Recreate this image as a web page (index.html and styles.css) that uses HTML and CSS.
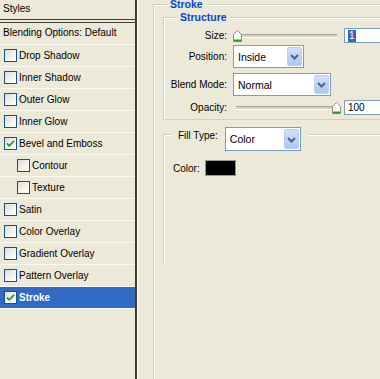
FILE: index.html
```html
<!DOCTYPE html>
<html>
<head>
<meta charset="utf-8">
<link rel="stylesheet" href="styles.css">
</head>
<body>
<div class="app">
  <div class="sidebar">
    <div class="styles-head">Styles</div>
    <div class="list">
      <div class="blend-row">Blending Options: Default</div>
      <div class="row"><span class="cb"></span>Drop Shadow</div>
      <div class="row"><span class="cb"></span>Inner Shadow</div>
      <div class="row"><span class="cb"></span>Outer Glow</div>
      <div class="row"><span class="cb"></span>Inner Glow</div>
      <div class="row"><span class="cb"><svg viewBox="0 0 11 11" class="check"><path d="M2 5.5 L4.3 7.8 L9 2.8"/></svg></span>Bevel and Emboss</div>
      <div class="row sub"><span class="cb"></span>Contour</div>
      <div class="row sub"><span class="cb"></span>Texture</div>
      <div class="row"><span class="cb"></span>Satin</div>
      <div class="row"><span class="cb"></span>Color Overlay</div>
      <div class="row"><span class="cb"></span>Gradient Overlay</div>
      <div class="row"><span class="cb"></span>Pattern Overlay</div>
      <div class="row selected"><span class="cb"><svg viewBox="0 0 11 11" class="check"><path d="M2 5.5 L4.3 7.8 L9 2.8"/></svg></span>Stroke</div>
    </div>
  </div>
  <div class="main">
    <div class="group stroke-group">
      <div class="group-title">Stroke</div>
      <div class="group structure">
        <div class="group-title">Structure</div>
        <div class="field size-row">
          <span class="label">Size:</span>
          <div class="slider">
            <div class="track"></div>
            <svg class="thumb thumb-left" viewBox="0 0 9 12"><path d="M0.5 11.5 V4.5 L4.5 0.5 L8.5 4.5 V11.5 Z" fill="#fff" stroke="#8c8c7c"/><rect x="1" y="9.5" width="7" height="2" fill="#21A121"/></svg>
          </div>
          <div class="num"><span class="sel">1</span></div>
        </div>
        <div class="field pos-row">
          <span class="label">Position:</span>
          <div class="select w-pos"><span class="sel-text">Inside</span><span class="dd"><svg viewBox="0 0 13 17"><polyline points="3,7 6.5,10.5 10,7"/></svg></span></div>
        </div>
        <div class="field blend-mode-row">
          <span class="label">Blend Mode:</span>
          <div class="select w-blend"><span class="sel-text">Normal</span><span class="dd"><svg viewBox="0 0 13 17"><polyline points="3,7 6.5,10.5 10,7"/></svg></span></div>
        </div>
        <div class="field opacity-row">
          <span class="label">Opacity:</span>
          <div class="slider">
            <div class="track"></div>
            <svg class="thumb thumb-right" viewBox="0 0 9 12"><path d="M0.5 11.5 V4.5 L4.5 0.5 L8.5 4.5 V11.5 Z" fill="#fff" stroke="#8c8c7c"/><rect x="1" y="9.5" width="7" height="2" fill="#21A121"/></svg>
          </div>
          <div class="num">100</div>
        </div>
      </div>
      <div class="group fill">
        <div class="fill-title">
          <span class="fill-label">Fill Type:</span>
          <div class="select w-fill"><span class="sel-text">Color</span><span class="dd"><svg viewBox="0 0 13 17"><polyline points="3,7 6.5,10.5 10,7"/></svg></span></div>
        </div>
        <div class="color-row">
          <span class="color-label">Color:</span>
          <span class="swatch"></span>
        </div>
      </div>
    </div>
  </div>
</div>
</body>
</html>
```

FILE: styles.css
```css
html, body {
  margin: 0;
  padding: 0;
}
body {
  width: 380px;
  height: 379px;
  overflow: hidden;
  background: #ECE9D8;
  font-family: "Liberation Sans", Arial, sans-serif;
  font-size: 10px;
  color: #000;
}
.app {
  display: flex;
  height: 379px;
}
.sidebar {
  flex: none;
  width: 135px;
  border-right: 2px solid #3a3a3a;
  box-shadow: 1px 0 0 #fff;
  background: #ECE9D8;
}
.styles-head {
  height: 19px;
  line-height: 17px;
  padding-left: 3px;
  border-bottom: 1px solid #404040;
}
.list {
  margin-top: 2px;
  border-top: 1px solid #404040;
}
.blend-row {
  height: 21px;
  line-height: 20px;
  padding-left: 3px;
}
.row {
  height: 21px;
  border-top: 1px solid #FAF9F2;
  display: flex;
  align-items: center;
  padding-left: 4px;
}
.row:last-child {
  border-bottom: 1px solid #FAF9F2;
}
.row.sub {
  padding-left: 17px;
}
.row.selected {
  background: #316AC5;
  color: #fff;
  font-weight: bold;
}
.cb {
  flex: none;
  box-sizing: border-box;
  width: 13px;
  height: 13px;
  border: 1px solid #1C5180;
  background: linear-gradient(135deg, #DCDCD7 0%, #F4F4F0 60%, #fff 100%);
  margin-right: 2px;
  display: flex;
}
.check {
  width: 11px;
  height: 11px;
}
.check path {
  fill: none;
  stroke: #21A121;
  stroke-width: 1.8;
}

.main {
  flex: 1;
  overflow: hidden;
  padding-left: 16px;
}
.group {
  border-top: 1px solid #D0D0BF;
  border-left: 1px solid #D0D0BF;
  box-shadow: inset 1px 1px 0 #fff;
}
.group-title {
  width: fit-content;
  margin-top: -8px;
  margin-left: 13px;
  padding: 0 3px;
  background: #ECE9D8;
  line-height: 14px;
  font-weight: bold;
  color: #0046D5;
  font-size: 10.5px;
}
.stroke-group {
  margin-top: 4px;
  height: 420px;
  width: 400px;
}
.structure {
  margin-top: 6px;
  margin-left: 9px;
  padding-bottom: 4px;
  border-bottom: 1px solid #D0D0BF;
  width: 380px;
}
.field {
  display: flex;
  align-items: center;
}
.label {
  flex: none;
  width: 63px;
  text-align: right;
  margin-right: 6px;
}
.size-row {
  margin-top: 3px;
  height: 16px;
}
.pos-row {
  margin-top: 2px;
  height: 23px;
}
.blend-mode-row {
  margin-top: 5px;
  height: 23px;
}
.opacity-row {
  margin-top: 4px;
  height: 15px;
}
.slider {
  position: relative;
  flex: none;
  width: 108px;
  height: 15px;
}
.track {
  position: absolute;
  left: 3px;
  right: 4px;
  top: 6px;
  height: 2px;
  border-top: 1px solid #A7A698;
  border-bottom: 1px solid #fff;
  background: #D6D3C4;
}
.thumb {
  position: absolute;
  top: 2px;
  width: 9px;
  height: 12px;
}
.thumb-left { left: 0; }
.thumb-right { right: 0; }
.num {
  flex: none;
  box-sizing: border-box;
  margin-left: 3px;
  width: 60px;
  height: 15px;
  border: 1px solid #7F9DB9;
  background: #fff;
  padding-left: 3px;
  line-height: 13px;
}
.sel {
  background: #316AC5;
  color: #fff;
  padding: 0 1px;
  display: inline-block;
  line-height: 12px;
}
.select {
  flex: none;
  box-sizing: border-box;
  height: 23px;
  border: 1px solid #7F9DB9;
  background: #fff;
  display: flex;
  align-items: center;
  justify-content: space-between;
  padding: 1px;
}
.sel-text {
  padding-left: 3px;
  font-size: 10.5px;
}
.dd {
  box-sizing: border-box;
  width: 15px;
  height: 19px;
  border: 1px solid #B9CDF5;
  border-radius: 2px;
  background: linear-gradient(180deg, #D2E0FC 0%, #BCD0F8 60%, #AEC6F6 100%);
  display: flex;
  align-items: center;
  justify-content: center;
}
.dd svg {
  width: 13px;
  height: 17px;
}
.dd polyline {
  fill: none;
  stroke: #4D6185;
  stroke-width: 2;
}
.w-pos { width: 71px; }
.w-blend { width: 98px; }
.w-fill { width: 76px; height: 24px; }
.w-fill .dd { height: 20px; }

.fill {
  margin-top: 14px;
  margin-left: 9px;
  height: 128px;
  width: 380px;
}
.fill-title {
  display: flex;
  align-items: flex-start;
  width: fit-content;
  margin-top: -8px;
  margin-left: 9px;
  padding: 0 6px 0 5px;
  background: #ECE9D8;
}
.fill-label {
  padding-top: 2px;
  line-height: 14px;
  margin-right: 7px;
}
.color-row {
  display: flex;
  align-items: center;
  margin-top: 9px;
  padding-left: 9px;
  height: 16px;
}
.color-label {
  margin-right: 5px;
}
.swatch {
  box-sizing: border-box;
  width: 31px;
  height: 16px;
  background: #000;
  border: 1px solid #9A9A8C;
}
```
